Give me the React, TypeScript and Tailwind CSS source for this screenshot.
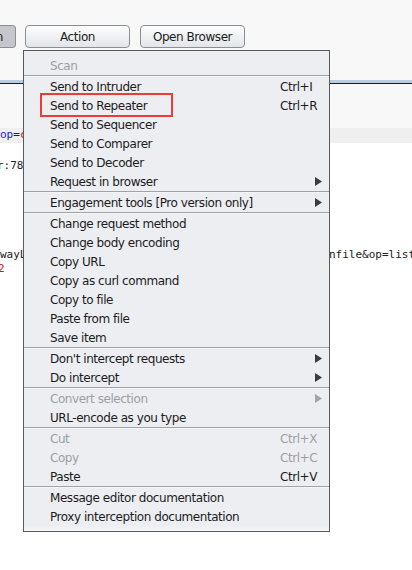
import React from 'react'

type Item =
  | { sep: true }
  | { label: string; shortcut?: string; sub?: boolean; disabled?: boolean; sep?: false }

const items: Item[] = [
  { label: 'Scan', disabled: true },
  { sep: true },
  { label: 'Send to Intruder', shortcut: 'Ctrl+I' },
  { label: 'Send to Repeater', shortcut: 'Ctrl+R' },
  { label: 'Send to Sequencer' },
  { label: 'Send to Comparer' },
  { label: 'Send to Decoder' },
  { label: 'Request in browser', sub: true },
  { sep: true },
  { label: 'Engagement tools [Pro version only]', sub: true },
  { sep: true },
  { label: 'Change request method' },
  { label: 'Change body encoding' },
  { label: 'Copy URL' },
  { label: 'Copy as curl command' },
  { label: 'Copy to file' },
  { label: 'Paste from file' },
  { label: 'Save item' },
  { sep: true },
  { label: "Don't intercept requests", sub: true },
  { label: 'Do intercept', sub: true },
  { sep: true },
  { label: 'Convert selection', sub: true, disabled: true },
  { label: 'URL-encode as you type' },
  { sep: true },
  { label: 'Cut', shortcut: 'Ctrl+X', disabled: true },
  { label: 'Copy', shortcut: 'Ctrl+C', disabled: true },
  { label: 'Paste', shortcut: 'Ctrl+V' },
  { sep: true },
  { label: 'Message editor documentation' },
  { label: 'Proxy interception documentation' },
]

function Arrow({ disabled }: { disabled?: boolean }) {
  return (
    <svg width="7" height="9" viewBox="0 0 7 9">
      <path d="M0 0 L7 4.5 L0 9 Z" fill={disabled ? '#a3a4a8' : '#3b3b3b'} />
    </svg>
  )
}

function ContextMenu() {
  return (
    <div className="absolute left-[23px] top-[50px] w-[307px] border border-[#5a5a5a] bg-[#edeef2] pt-[5px]">
      {items.map((it, i) =>
        it.sep ? (
          <div key={i} className="h-[2px] border-t border-[#a2a3a8] bg-[#f4f5f7]"></div>
        ) : (
          <div
            key={i}
            className={`flex h-[19px] items-center pl-[26px] ${it.disabled ? 'text-[#9d9ea2]' : 'text-[#1c1c1c]'}`}
          >
            <span className="flex-1 whitespace-nowrap">{it.label}</span>
            <span className="flex w-[49px] items-center">
              {it.shortcut && <span className="whitespace-nowrap">{it.shortcut}</span>}
              {it.sub && (
                <span className="ml-auto pr-[7px] flex">
                  <Arrow disabled={it.disabled} />
                </span>
              )}
            </span>
          </div>
        )
      )}
      <div className="h-[5px] bg-gradient-to-b from-[#edeef2] to-[#f7f8f9]"></div>
    </div>
  )
}

export default function App() {
  return (
    <div className="relative h-[570px] w-[412px] overflow-hidden bg-white font-['DejaVu_Sans',sans-serif] text-[12px] tracking-[-0.45px]">
      {/* toolbar */}
      <div className="flex h-[80px] items-start bg-[#f8f8f8] pt-[25px]">
        <div className="flex h-[23px] w-[16px] items-center justify-end rounded-r-[4px] border border-l-0 border-[#8d8e93] bg-[#c5c7cc] pr-[12px] text-[#1c1c1c]">
          n
        </div>
        <button className="ml-[9px] flex h-[23px] w-[105px] items-center justify-center rounded-[4px] border border-[#8d8e93] bg-gradient-to-b from-[#fdfdfd] to-[#e3e5e9] pt-px text-[#1c1c1c]">
          Action
        </button>
        <button className="ml-[10px] flex h-[23px] w-[105px] items-center justify-center rounded-[4px] border border-[#8d8e93] bg-gradient-to-b from-[#fdfdfd] to-[#e3e5e9] pt-px text-[#1c1c1c]">
          Open Browser
        </button>
      </div>

      {/* tab strip lines */}
      <div className="h-[3px] bg-[#b8cde3]"></div>
      <div className="h-px bg-[#1e1e1e]"></div>

      {/* editor area */}
      <div className="font-['DejaVu_Sans_Mono',monospace] text-[11px] tracking-normal">
        <div className="h-[44px] bg-[#f8f8f8]"></div>
        <div className="flex h-[15px] items-center bg-[#efefef]">
          <span className="text-[#2323d8]">op</span>
          <span className="text-[#222]">=</span>
          <span className="text-[#c41a1a]">c</span>
        </div>
        <div className="h-[16px]"></div>
        <div className="flex h-[14px] items-center">
          <span className="ml-[-3px] text-[#222]">r:78</span>
        </div>
        <div className="h-[75px]"></div>
        <div className="flex h-[14px] items-center">
          <span className="w-[26px] text-[#222]">wayL</span>
          <span className="ml-[303px] whitespace-nowrap text-[#222]">nfile&amp;op=list</span>
        </div>
        <div className="flex h-[15px] items-center">
          <span className="ml-[-2px] text-[#c41a1a]">2</span>
        </div>
      </div>

      <ContextMenu />

      {/* annotation */}
      <div className="absolute left-[40px] top-[93px] h-[24px] w-[133px] border-2 border-[#ef3a3a]"></div>
    </div>
  )
}
